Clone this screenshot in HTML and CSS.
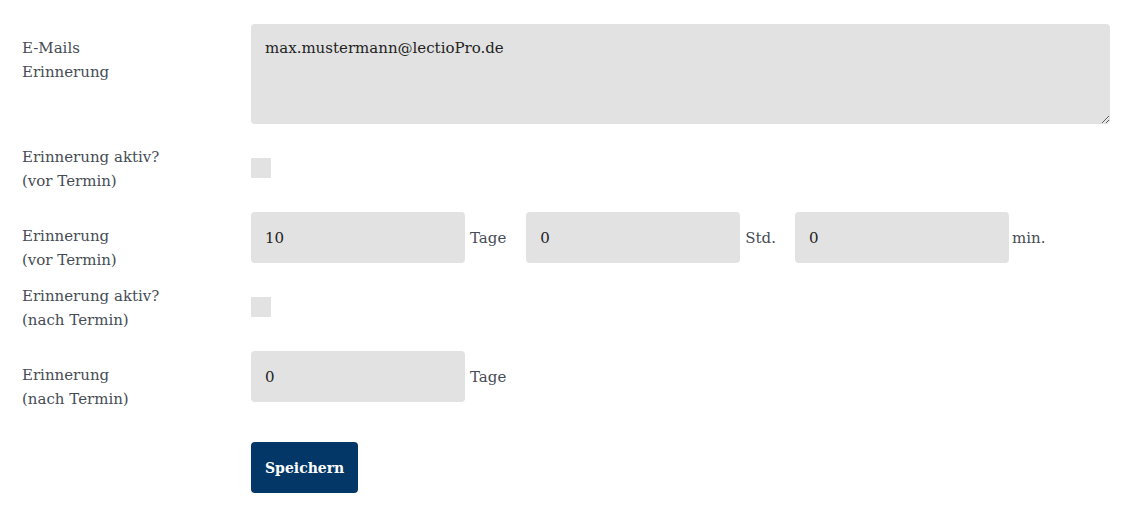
FILE: index.html
```html
<!DOCTYPE html>
<html lang="de">
<head>
<meta charset="utf-8">
<title>Erinnerung</title>
<link rel="stylesheet" href="styles.css">
</head>
<body>
<form class="form">
  <div class="row row-mail">
    <label class="label">E-Mails<br>Erinnerung</label>
    <div class="field">
      <textarea class="textarea">max.mustermann@lectioPro.de</textarea>
    </div>
  </div>
  <div class="row row-check">
    <label class="label">Erinnerung aktiv?<br>(vor Termin)</label>
    <div class="field field-check"><input type="checkbox" class="check"></div>
  </div>
  <div class="row row-gap">
    <label class="label">Erinnerung<br>(vor Termin)</label>
    <div class="field field-inline">
      <input class="input" type="text" value="10"><span class="unit">Tage</span>
      <input class="input" type="text" value="0"><span class="unit unit-std">Std.</span>
      <input class="input" type="text" value="0"><span class="unit unit-last">min.</span>
    </div>
  </div>
  <div class="row row-check row-flush">
    <label class="label">Erinnerung aktiv?<br>(nach Termin)</label>
    <div class="field field-check"><input type="checkbox" class="check"></div>
  </div>
  <div class="row row-gap">
    <label class="label">Erinnerung<br>(nach Termin)</label>
    <div class="field field-inline">
      <input class="input" type="text" value="0"><span class="unit">Tage</span>
    </div>
  </div>
  <div class="row row-button">
    <div class="label"></div>
    <div class="field"><button type="button" class="btn">Speichern</button></div>
  </div>
</form>
</body>
</html>
```
FILE: styles.css
```css
* { box-sizing: border-box; }
html, body { margin: 0; padding: 0; background: #fff; }
body {
  font-family: "DejaVu Serif", "Liberation Serif", serif;
  font-size: 15px;
  line-height: 24px;
  color: #464c55;
}
.form {
  display: flex;
  flex-direction: column;
  padding: 24px 19px 0 22px;
}
.row { display: flex; align-items: flex-start; }
.label {
  width: 229px;
  flex: 0 0 229px;
  padding-top: 12px;
}
.field { flex: 1; display: flex; }
.textarea {
  width: 100%;
  height: 100px;
  background: #e2e2e2;
  border: none;
  border-radius: 4px;
  padding: 12px 14px;
  font: inherit;
  color: #222;
  resize: vertical;
  display: block;
}
.row-check { margin-top: 9px; }
.row-flush { margin-top: 0; }
.field-check { padding-top: 25px; }
.check {
  appearance: none;
  -webkit-appearance: none;
  width: 20px;
  height: 20px;
  margin: 0;
  background: #e2e2e2;
  border: none;
  border-radius: 1px;
}
.row-gap { margin-top: 19px; }
.field-inline { align-items: center; }
.input {
  width: 214px;
  height: 51px;
  background: #e2e2e2;
  border: none;
  border-radius: 4px;
  padding: 0 14px;
  font: inherit;
  color: #222;
}
.unit { margin-left: 5px; margin-right: 20px; }
.unit-std { margin-right: 19px; }
.unit-last { margin-left: 3px; margin-right: 0; }
.row-button { margin-top: 31px; }
.btn {
  height: 51px;
  padding: 0 14px;
  background: #023767;
  color: #fff;
  border: none;
  border-radius: 4px;
  font-family: "DejaVu Serif", serif;
  font-weight: bold;
  font-size: 14px;
}
```
